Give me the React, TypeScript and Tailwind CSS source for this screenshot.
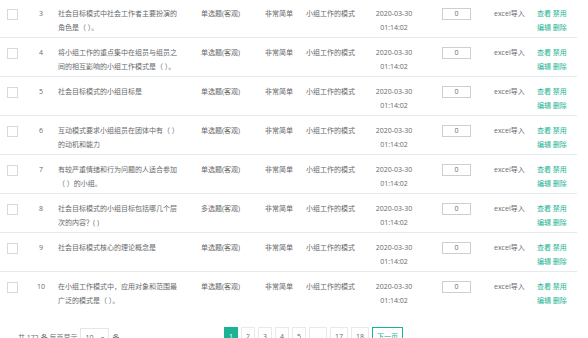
import React from "react"

interface Question {
  no: number
  lines: string[]
  type: string
}

const questions: Question[] = [
  { no: 3, lines: ["社会目标模式中社会工作者主要扮演的", "角色是（ ）。"], type: "单选题(客观)" },
  { no: 4, lines: ["将小组工作的重点集中在组员与组员之", "间的相互影响的小组工作模式是（ ）。"], type: "单选题(客观)" },
  { no: 5, lines: ["社会目标模式的小组目标是"], type: "单选题(客观)" },
  { no: 6, lines: ["互动模式要求小组组员在团体中有（ ）", "的动机和能力"], type: "单选题(客观)" },
  { no: 7, lines: ["有较严重情绪和行为问题的人适合参加", "（ ）的小组。"], type: "单选题(客观)" },
  { no: 8, lines: ["社会目标模式的小组目标包括哪几个层", "次的内容？( )"], type: "多选题(客观)" },
  { no: 9, lines: ["社会目标模式核心的理论概念是"], type: "单选题(客观)" },
  { no: 10, lines: ["在小组工作模式中，应用对象和范围最", "广泛的模式是（ ）。"], type: "单选题(客观)" },
]

const pages = ["1", "2", "3", "4", "5", "...", "17", "18"]

const Row = ({ q }: { q: Question }) => (
  <div className="grid h-[39px] grid-cols-[30px_22px_149px_64px_41px_64px_48px_76px_43px_40px] border-t border-[#e7eaec] pt-[8px] leading-[14px]">
    <div className="pl-[7px] pt-[2px]">
      <div className="h-[11px] w-[11px] border border-[#d9d9d9] bg-white" />
    </div>
    <div className="text-center">{q.no}</div>
    <div className="pl-[6px]">
      {q.lines.map((l, i) => (
        <div key={i} className="whitespace-nowrap">
          {l}
        </div>
      ))}
    </div>
    <div>{q.type}</div>
    <div>非常简单</div>
    <div>小组工作的模式</div>
    <div className="text-center">
      <div>2020-03-30</div>
      <div>01:14:02</div>
    </div>
    <div className="pl-[24px] pt-[1px]">
      <div className="flex h-[12px] w-[29px] items-center justify-center border border-[#cfcfcf] bg-white">0</div>
    </div>
    <div>excel导入</div>
    <div className="text-[#1ab394]">
      <div>查看 禁用</div>
      <div>编辑 删除</div>
    </div>
  </div>
)

export default function App() {
  return (
    <div
      className="h-[338px] w-[588px] overflow-hidden bg-white text-[7px] text-[#676a6c]"
      style={{ fontFamily: '"Open Sans", "Noto Sans CJK SC", sans-serif' }}
    >
      <div className="mt-[-2px] w-[577px]">
        {questions.map((q) => (
          <Row key={q.no} q={q} />
        ))}
      </div>
      <div className="mt-[17px] flex items-start">
        <div className="flex w-[224px] items-center pl-[18px] pt-[1px] leading-[20px]">
          <span>共 172 条 每页显示</span>
          <div className="mx-[3px] flex h-[20px] w-[29px] items-center justify-between border border-[#e5e6e7] px-[4px]">
            <span>10</span>
            <span className="text-[6px] text-[#999]">▾</span>
          </div>
          <span>条</span>
        </div>
        <div className="flex gap-[3px]">
          {pages.map((p) => (
            <div
              key={p}
              className={
                p === "1"
                  ? "flex h-[20px] w-[14px] items-center justify-center border border-[#1ab394] bg-[#1ab394] text-white"
                  : p.length > 1
                    ? "flex h-[20px] w-[18px] items-center justify-center border border-[#e7eaec] bg-white"
                    : "flex h-[20px] w-[14px] items-center justify-center border border-[#e7eaec] bg-white"
              }
            >
              {p === "..." ? "" : p}
            </div>
          ))}
          <div className="flex h-[20px] w-[31px] items-center justify-center border border-[#1ab394] bg-white text-[#1ab394]">
            下一页
          </div>
        </div>
      </div>
    </div>
  )
}
